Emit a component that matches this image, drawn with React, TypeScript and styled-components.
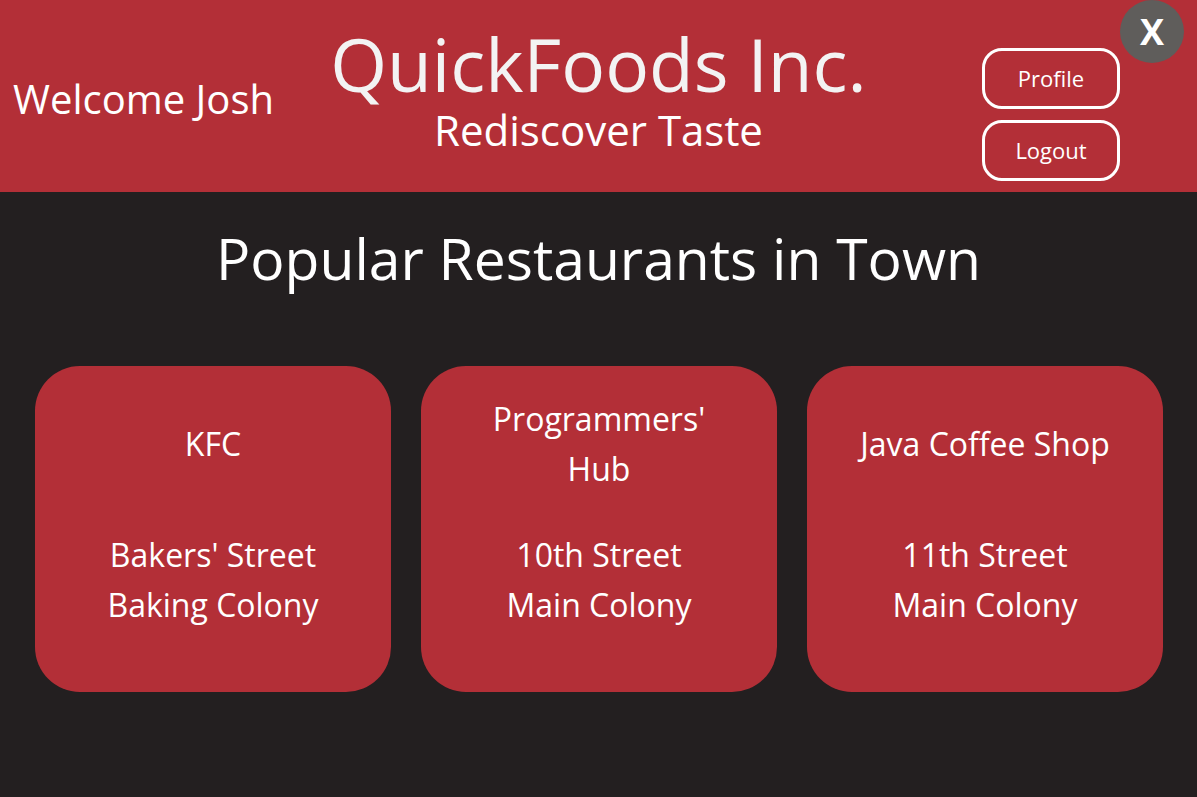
import React from "react";
import styled, { createGlobalStyle } from "styled-components";

const GlobalStyle = createGlobalStyle`
  html, body {
    margin: 0;
    padding: 0;
    background: #231f20;
  }
  body {
    font-family: "Open Sans", "Noto Sans", sans-serif;
    color: #ffffff;
  }
`;

type Restaurant = {
  name: string;
  street: string;
  colony: string;
};

const restaurants: Restaurant[] = [
  { name: "KFC", street: "Bakers' Street", colony: "Baking Colony" },
  { name: "Programmers' Hub", street: "10th Street", colony: "Main Colony" },
  { name: "Java Coffee Shop", street: "11th Street", colony: "Main Colony" },
];

function App() {
  return (
    <>
      <GlobalStyle />
      <Page>
        <Header>
          <Welcome>Welcome Josh</Welcome>
          <Brand>
            <BrandName>QuickFoods Inc.</BrandName>
            <Tagline>Rediscover Taste</Tagline>
          </Brand>
          <Actions>
            <OutlineButton>Profile</OutlineButton>
            <OutlineButton>Logout</OutlineButton>
          </Actions>
          <CloseButton aria-label="close">X</CloseButton>
        </Header>

        <Main>
          <SectionTitle>Popular Restaurants in Town</SectionTitle>
          <CardRow>
            {restaurants.map((r) => (
              <Card key={r.name}>
                <CardName>{r.name}</CardName>
                <Address>
                  <div>{r.street}</div>
                  <div>{r.colony}</div>
                </Address>
              </Card>
            ))}
          </CardRow>
        </Main>
      </Page>
    </>
  );
}

const Page = styled.div`
  width: 1197px;
  height: 797px;
  overflow: hidden;
  background: #231f20;
`;

const Header = styled.header`
  position: relative;
  height: 192px;
  background: #b32f37;
  display: grid;
  grid-template-columns: 1fr auto 1fr;
  align-items: center;
`;

const Welcome = styled.div`
  justify-self: start;
  padding-left: 13px;
  padding-top: 4px;
  font-size: 40px;
  color: #ffffff;
`;

const Brand = styled.div`
  display: flex;
  flex-direction: column;
  align-items: center;
  color: #f3f3f3;
  margin-top: -20px;
`;

const BrandName = styled.div`
  font-size: 73px;
  line-height: 88px;
`;

const Tagline = styled.div`
  font-size: 42px;
  line-height: 44px;
  color: #ffffff;
`;

const Actions = styled.div`
  justify-self: end;
  align-self: start;
  padding-right: 77px;
  padding-top: 48px;
  display: flex;
  flex-direction: column;
  gap: 11px;
`;

const OutlineButton = styled.button`
  box-sizing: border-box;
  width: 138px;
  height: 61px;
  border: 3px solid #ffffff;
  border-radius: 20px;
  background: transparent;
  color: #ffffff;
  font-family: "Open Sans", "Noto Sans", sans-serif;
  font-size: 22px;
  padding: 0 0 2px;
  cursor: pointer;
`;

const CloseButton = styled.button`
  position: absolute;
  top: 0;
  left: 1120px;
  width: 64px;
  height: 63px;
  border: none;
  border-radius: 50%;
  background: #5f5d5b;
  color: #ffffff;
  font-family: "Open Sans", "Noto Sans", sans-serif;
  font-weight: 700;
  font-size: 36px;
  line-height: 1;
  padding: 0;
  cursor: pointer;
`;

const Main = styled.main`
  display: flex;
  flex-direction: column;
`;

const SectionTitle = styled.h1`
  margin: 0;
  padding-top: 21px;
  height: 150px;
  box-sizing: border-box;
  text-align: center;
  font-weight: 400;
  font-size: 57px;
  line-height: 90px;
  color: #ffffff;
`;

const CardRow = styled.div`
  display: flex;
  gap: 30px;
  padding: 24px 32px 0 35px;
`;

const Card = styled.div`
  box-sizing: border-box;
  width: 356px;
  height: 326px;
  border-radius: 45px;
  background: #b32f37;
  display: flex;
  flex-direction: column;
  align-items: center;
  text-align: center;
  font-size: 32px;
  line-height: 50px;
`;

const CardName = styled.div`
  height: 156px;
  max-width: 262px;
  display: flex;
  align-items: center;
  justify-content: center;
`;

const Address = styled.div`
  margin-top: 8px;
`;

export default App;
